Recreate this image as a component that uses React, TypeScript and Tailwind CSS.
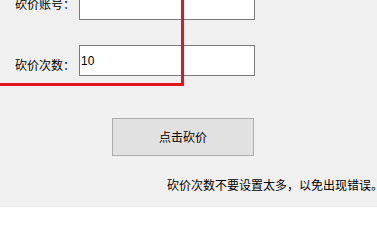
const cjk = "font-['SimSun','Noto_Sans_CJK_SC',sans-serif]"

export default function App() {
  return (
    <div className={`relative w-[377px] h-[207px] overflow-hidden bg-[#f0f0f0] text-[12px] leading-[12px] text-black ${cjk}`}>
      <div className="flex items-start -mt-[11px]">
        <span className="ml-[15px] mt-[9px] w-[64px] whitespace-nowrap">砍价账号：</span>
        <div className="w-[176px] h-[31px] border border-[#7a7a7a] bg-white" />
      </div>

      <div className="flex items-start mt-[25px]">
        <span className="ml-[15px] mt-[14px] w-[64px] whitespace-nowrap">砍价次数：</span>
        <div className="w-[176px] h-[31px] border border-[#7a7a7a] bg-white flex items-center pl-[1px] font-['Liberation_Sans',sans-serif]">
          10
        </div>
      </div>

      <div className="mt-[42px] ml-[112px] w-[142px] h-[38px] border border-[#adadad] bg-[#e1e1e1] flex items-center justify-center">
        点击砍价
      </div>

      <p className="mt-[23px] ml-[167px] whitespace-nowrap">砍价次数不要设置太多，以免出现错误。</p>

      {/* highlight annotation */}
      <div className="absolute left-0 top-0 w-[184px] h-[86px] border-r-[3px] border-b-[3px] border-[#e3161b] pointer-events-none" />
    </div>
  )
}
